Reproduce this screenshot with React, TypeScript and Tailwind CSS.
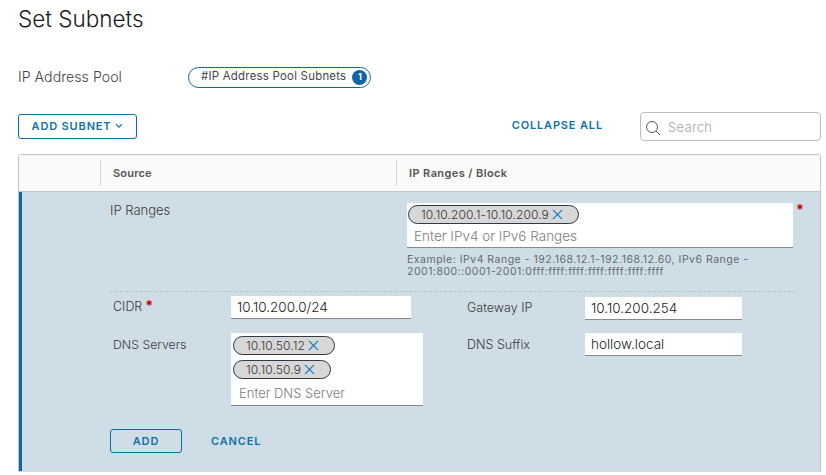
import React from "react";

const Search = () => (
  <svg width="16" height="16" viewBox="0 0 16 16" fill="none" stroke="#565656" strokeWidth="1">
    <circle cx="7" cy="7" r="5.5" />
    <path d="M11 11l4 4" />
  </svg>
);

const X = () => (
  <svg width="11" height="11" viewBox="0 0 11 11" fill="none" stroke="#1b7fc4" strokeWidth="1.1" className="shrink-0">
    <path d="M1 1l9 9M10 1l-9 9" />
  </svg>
);

const Chevron = () => (
  <svg width="8" height="6" viewBox="0 0 8 6" fill="none" stroke="#0072a3" strokeWidth="1.2">
    <path d="M1 1.2l3 3 3-3" />
  </svg>
);

const Chip = ({ text }: { text: string }) => (
  <div className="flex h-[19px] w-fit items-center gap-[3px] rounded-full border border-[#2b3b47] bg-[#d7d7d7] pl-[12px] pr-[15px] text-[12px] tracking-[0.1px] font-light text-[#333]">
    <span>{text}</span>
    <X />
  </div>
);

const Line = ({ text }: { text: string }) => (
  <div className="flex h-[23px] items-center border-b border-[#8a8a8a] bg-white pl-[6px] text-[13.5px] font-light text-[#222]">{text}</div>
);

export default function App() {
  return (
    <div className="h-[475px] w-[826px] overflow-hidden bg-white font-['Inter',sans-serif] text-[#4a4a4a]">
      <div className="pl-[18px] pr-[5px]">
        <h1 className="pt-[5px] text-[22.5px] leading-[28px] font-light text-[#1a1a1a]">Set Subnets</h1>
        <div className="mt-[32px] flex h-[24px] items-center">
          <div className="w-[170px] text-[14.2px] font-light text-[#444]">IP Address Pool</div>
          <div className="flex h-[21px] items-center gap-[6px] rounded-full border border-[#0f65a8] pl-[12px] pr-[3px] text-[11.4px] text-[#444]">
            <span className="tracking-[0.25px]">#IP Address Pool Subnets</span>
            <span className="flex h-[15px] w-[15px] items-center justify-center rounded-full bg-[#0f65a8] text-[9px] font-bold text-white">1</span>
          </div>
        </div>
        <div className="mt-[23px] flex h-[28px] items-center justify-between">
          <button className="flex h-[25px] w-[119px] items-center justify-center gap-[4px] rounded-[3px] border border-[#0072a3] text-[11px] font-semibold tracking-[0.85px] text-[#0f72a8]">
            ADD SUBNET <Chevron />
          </button>
          <div className="flex items-center">
            <button className="mr-[37px] -mt-[2px] text-[11px] font-semibold tracking-[0.85px] text-[#0f72a8]">COLLAPSE ALL</button>
            <div className="flex h-[29px] w-[181px] items-center gap-[3px] rounded-[4px] border border-[#bdbdbd] pl-[4px] pt-[3px] text-[13px] font-light text-[#a8a8a8]">
              <Search />
              <span className="ml-[4px] tracking-[0.3px]">Search</span>
            </div>
          </div>
        </div>

        <div className="mt-[14px] h-[318px] rounded-t-[3px] border border-b-[#d8d8d8] border-[#c4c4c4]">
          <div className="flex h-[37px] items-center border-b border-[#c4c4c4] bg-[#fafafa] text-[11px] font-semibold text-[#555]">
            <div className="w-[81px]" />
            <div className="flex h-[25px] w-[296px] items-center border-l border-[#d5d5d5] pl-[12px] tracking-[0.2px]">Source</div>
            <div className="flex h-[25px] items-center border-l border-[#d5d5d5] pl-[12px] tracking-[0.4px]">IP Ranges / Block</div>
          </div>

          <div className="h-[279px] border-l-[3px] border-[#0f65a8] bg-[#cfdee6] pl-[88px] pr-[24px]">
            <div className="flex pt-[11px]">
              <div className="w-[297px] shrink-0 text-[13px] leading-[14px] font-light text-[#3a3a3a]">IP Ranges</div>
              <div className="w-[386px] shrink-0">
                <div className="h-[45px] border-b border-[#8a8a8a] bg-white">
                  <div className="pt-[2px] pl-[1px]"><Chip text="10.10.200.1-10.10.200.9" /></div>
                  <div className="pl-[7px] pt-[2px] text-[13.5px] leading-[20px] font-light text-[#7d7d7d]">Enter IPv4 or IPv6 Ranges</div>
                </div>
                <div className="mt-[6px] text-[10.5px] leading-[12px] tracking-[0.5px] text-[#5f6b73]">
                  <div className="h-[12px] whitespace-nowrap">Example: IPv4 Range - 192.168.12.1-192.168.12.60, IPv6 Range -</div>
                  <div className="h-[12px] whitespace-nowrap">2001:800::0001-2001:0fff:ffff:ffff:ffff:ffff:ffff:ffff</div>
                </div>
              </div>
              <span className="ml-[3px] text-[14px] leading-[14px] font-bold text-[#c00]">*</span>
            </div>

            <div className="mt-[13px] border-t border-dashed border-[#b5c4cc]" />

            <div className="flex pt-[4px]">
              <div className="w-[357px]">
                <div className="flex">
                  <div className="flex h-[23px] w-[121px] items-center pl-[3px] text-[12.5px] font-light text-[#3a3a3a]">
                    CIDR<span className="ml-[3px] -translate-y-[2px] text-[14px] font-bold text-[#c00]">*</span>
                  </div>
                  <div className="w-[180px]"><Line text="10.10.200.0/24" /></div>
                </div>
                <div className="mt-[14px] flex">
                  <div className="w-[121px] pt-[3px] pl-[3px] text-[12.3px] font-light text-[#3a3a3a]">DNS Servers</div>
                  <div className="h-[73px] w-[192px] border-b border-[#8a8a8a] bg-white pl-[2px] pt-[3px]">
                    <Chip text="10.10.50.12" />
                    <div className="mt-[5px]"><Chip text="10.10.50.9" /></div>
                    <div className="pl-[6px] pt-[5px] text-[13px] font-light text-[#7d7d7d]">Enter DNS Server</div>
                  </div>
                </div>
              </div>
              <div className="pt-[1px]">
                <div className="flex">
                  <div className="flex h-[23px] w-[118px] items-center text-[12.5px] font-light text-[#3a3a3a]">Gateway IP</div>
                  <div className="w-[157px]"><Line text="10.10.200.254" /></div>
                </div>
                <div className="mt-[13px] flex">
                  <div className="flex h-[25px] w-[118px] items-center text-[12.5px] font-light text-[#3a3a3a]">DNS Suffix</div>
                  <div className="w-[157px]"><Line text="hollow.local" /></div>
                </div>
              </div>
            </div>

            <div className="mt-[23px] flex items-center">
              <button className="h-[24px] w-[72px] rounded-[3px] border border-[#0072a3] text-[11px] font-semibold tracking-[0.85px] text-[#0f72a8]">ADD</button>
              <button className="ml-[29px] text-[11px] font-semibold tracking-[0.85px] text-[#0f72a8]">CANCEL</button>
            </div>
          </div>
        </div>
      </div>
    </div>
  );
}
